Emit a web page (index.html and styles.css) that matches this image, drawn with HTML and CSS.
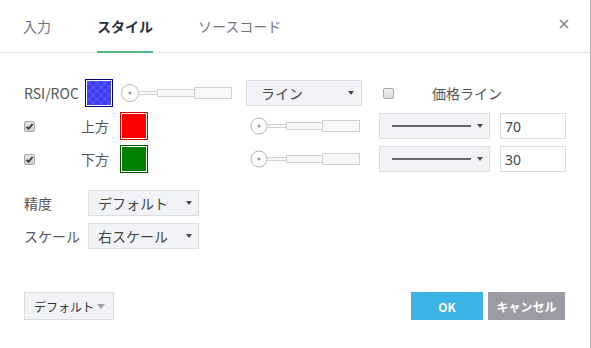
FILE: index.html
```html
<!DOCTYPE html>
<html lang="ja">
<head>
<meta charset="utf-8">
<link rel="stylesheet" href="styles.css">
</head>
<body>
<div class="dialog">
  <div class="header">
    <div class="tab">入力</div>
    <div class="tab active">スタイル</div>
    <div class="tab">ソースコード</div>
    <div class="close">
      <svg width="10" height="10" viewBox="0 0 10 10"><path d="M1 1L9 9M9 1L1 9" stroke="#9a9a9a" stroke-width="1.8"/></svg>
    </div>
  </div>

  <div class="content">
    <div class="rows">
      <div class="row">
        <div class="lbl w-rsi">RSI/ROC</div>
        <div class="swatch"><div class="fill checker"></div></div>
        <div class="slider m-s1">
          <svg width="111" height="20" viewBox="0 0 111 20"><circle cx="9" cy="10" r="8.5" fill="#fff" stroke="#b2b5be"/><circle cx="9" cy="10" r="1.5" fill="#9598a1"/><rect x="17.5" y="8.5" width="19" height="3" fill="#f8f8f8" stroke="#cfd1d6"/><rect x="36.5" y="6.5" width="37" height="7" fill="#f8f8f8" stroke="#cfd1d6"/><rect x="73.5" y="4.5" width="37" height="11" fill="#f8f8f8" stroke="#cfd1d6"/></svg>
        </div>
        <div class="select sel-type m-t1"><span class="seltext">ライン</span><span class="arrow"></span></div>
        <div class="cb m-cb1"></div>
        <div class="lbl m-price">価格ライン</div>
      </div>

      <div class="row">
        <div class="cell-cb"><div class="cb checked"><svg width="9" height="9" viewBox="0 0 9 9"><path d="M1.5 4.8L3.6 6.8L7.6 2" stroke="#333" stroke-width="1.8" fill="none"/></svg></div></div>
        <div class="lbl w-side">上方</div>
        <div class="swatch red"><div class="fill"></div></div>
        <div class="slider m-s2">
          <svg width="111" height="20" viewBox="0 0 111 20"><circle cx="9" cy="10" r="8" fill="#fff" stroke="#b2b5be"/><circle cx="9" cy="10" r="1.5" fill="#9598a1"/><rect x="17" y="8.5" width="19.5" height="3" fill="#f8f8f8" stroke="#cfd1d6"/><rect x="36.5" y="6.5" width="36" height="7" fill="#f8f8f8" stroke="#cfd1d6"/><rect x="72.5" y="4.5" width="37" height="11" fill="#f8f8f8" stroke="#cfd1d6"/></svg>
        </div>
        <div class="select sel-line m-l2"><span class="line"></span><span class="arrow"></span></div>
        <div class="input">70</div>
      </div>

      <div class="row">
        <div class="cell-cb"><div class="cb checked"><svg width="9" height="9" viewBox="0 0 9 9"><path d="M1.5 4.8L3.6 6.8L7.6 2" stroke="#333" stroke-width="1.8" fill="none"/></svg></div></div>
        <div class="lbl w-side">下方</div>
        <div class="swatch green"><div class="fill"></div></div>
        <div class="slider m-s2">
          <svg width="111" height="20" viewBox="0 0 111 20"><circle cx="9" cy="10" r="8" fill="#fff" stroke="#b2b5be"/><circle cx="9" cy="10" r="1.5" fill="#9598a1"/><rect x="17" y="8.5" width="19.5" height="3" fill="#f8f8f8" stroke="#cfd1d6"/><rect x="36.5" y="6.5" width="36" height="7" fill="#f8f8f8" stroke="#cfd1d6"/><rect x="72.5" y="4.5" width="37" height="11" fill="#f8f8f8" stroke="#cfd1d6"/></svg>
        </div>
        <div class="select sel-line m-l2"><span class="line"></span><span class="arrow"></span></div>
        <div class="input">30</div>
      </div>
    </div>

    <div class="rows rows2">
      <div class="row">
        <div class="lbl w-opt">精度</div>
        <div class="select sel-opt"><span class="seltext">デフォルト</span><span class="arrow"></span></div>
      </div>
      <div class="row">
        <div class="lbl w-opt">スケール</div>
        <div class="select sel-opt"><span class="seltext">右スケール</span><span class="arrow"></span></div>
      </div>
    </div>
  </div>

  <div class="footer">
    <div class="defbtn"><span>デフォルト</span><span class="arrow light"></span></div>
    <div class="actions">
      <div class="btn ok">OK</div>
      <div class="btn cancel">キャンセル</div>
    </div>
  </div>
</div>
</body>
</html>
```

FILE: styles.css
```css
* { box-sizing: border-box; }
html, body { margin: 0; padding: 0; background: #fff; }
body {
  font-family: "Noto Sans CJK JP", "Noto Sans", sans-serif;
  font-size: 14px;
  color: #555;
}
.dialog {
  width: 591px;
  height: 348px;
  border-right: 1px solid #b3b3b3;
  display: flex;
  flex-direction: column;
}
.header {
  height: 53px;
  border-bottom: 1px solid #e0e3eb;
  display: flex;
  padding-left: 23px;
  flex: none;
}
.tab {
  height: 53px;
  display: flex;
  align-items: center;
  border-bottom: 2px solid transparent;
  margin-right: 46px;
  font-size: 14px;
  color: #70737d;
  padding-top: 1px;
}
.tab.active {
  border-bottom-color: #53b987;
  color: #2a2e39;
  font-weight: 700;
  margin-right: 45px;
}
.close {
  margin-left: auto;
  margin-right: 21px;
  display: flex;
  align-items: center;
  padding-bottom: 5px;
}
.content {
  padding: 27px 0 0 24px;
  flex: none;
}
.rows { display: flex; flex-direction: column; gap: 7px; }
.rows2 { margin-top: 18px; }
.row { height: 26px; display: flex; align-items: center; }
.lbl { white-space: nowrap; line-height: 1; }
.w-rsi { width: 61px; }
.w-side { width: 39px; }
.w-opt { width: 64px; }
.cell-cb { width: 57px; display: flex; align-items: center; }
.swatch {
  width: 28px; height: 28px;
  border: 1px solid #00008b;
  padding: 1px;
  background: #fff;
  flex: none;
}
.swatch .fill { width: 100%; height: 100%; }
.checker {
  background-color: #5050ff;
  background-image: conic-gradient(#3d3dee 25%, transparent 0 50%, #3d3dee 0 75%, transparent 0);
  background-size: 8px 8px;
}
.swatch.red { border-color: #d40000; }
.swatch.red .fill { background: #ff0000; }
.swatch.green { border-color: #005000; }
.swatch.green .fill { background: #008000; }
.slider { display: flex; flex: none; }
.m-s1 { margin-left: 8px; }
.m-s2 { margin-left: 102px; }
.select {
  height: 26px;
  background: #f1f3f6;
  border: 1px solid #dadde2;
  display: flex;
  align-items: center;
  justify-content: space-between;
  padding: 0 7px 0 9px;
  color: #444;
  flex: none;
}
.sel-type { width: 116px; padding-left: 14px; }
.m-t1 { margin-left: 14px; }
.sel-line { width: 111px; padding-left: 12px; padding-right: 6px; }
.m-l2 { margin-left: 18px; }
.sel-opt { width: 111px; padding-right: 6px; }
.seltext { line-height: 1; }
.arrow {
  width: 0; height: 0;
  border-left: 3.5px solid transparent;
  border-right: 3.5px solid transparent;
  border-top: 4px solid #4a4a4a;
}
.arrow.light { border-top-color: #a0a0a0; border-left-width: 4px; border-right-width: 4px; border-top-width: 5px; }
.line { width: 79px; height: 2px; background: #666; }
.input {
  width: 66px; height: 26px;
  margin-left: 10px;
  border: 1px solid #dadde2;
  display: flex; align-items: center;
  padding-left: 4px;
  color: #444;
  font-family: "Noto Sans", "Noto Sans CJK JP", sans-serif;
  font-size: 14px;
}
.cb {
  width: 11px; height: 11px;
  border: 1px solid #a9a9a9;
  border-radius: 2px;
  background: linear-gradient(#f0f0f0, #dcdcdc);
  display: flex; align-items: center; justify-content: center;
  flex: none;
}
.cb.checked { background: linear-gradient(#e6e6e6, #cfcfcf); }
.m-cb1 { margin-left: 21px; }
.m-price { margin-left: 38px; }
.footer {
  margin-top: 43px;
  display: flex;
  justify-content: space-between;
  padding: 0 25px 0 24px;
}
.defbtn {
  width: 90px; height: 28px;
  background: #f1f3f6;
  border: 1px solid #d8dbe0;
  display: flex; align-items: center; justify-content: space-between;
  padding: 0 8px 0 9px;
  font-size: 12px;
  color: #333;
  font-weight: 400;
}
.actions { display: flex; gap: 5px; }
.btn {
  height: 28px;
  display: flex; align-items: center; justify-content: center;
  color: #fff; font-weight: 700; font-size: 12px;
}
.ok { width: 72px; background: #3bb3e4; }
.cancel { width: 77px; background: #9b9ca3; }
```
